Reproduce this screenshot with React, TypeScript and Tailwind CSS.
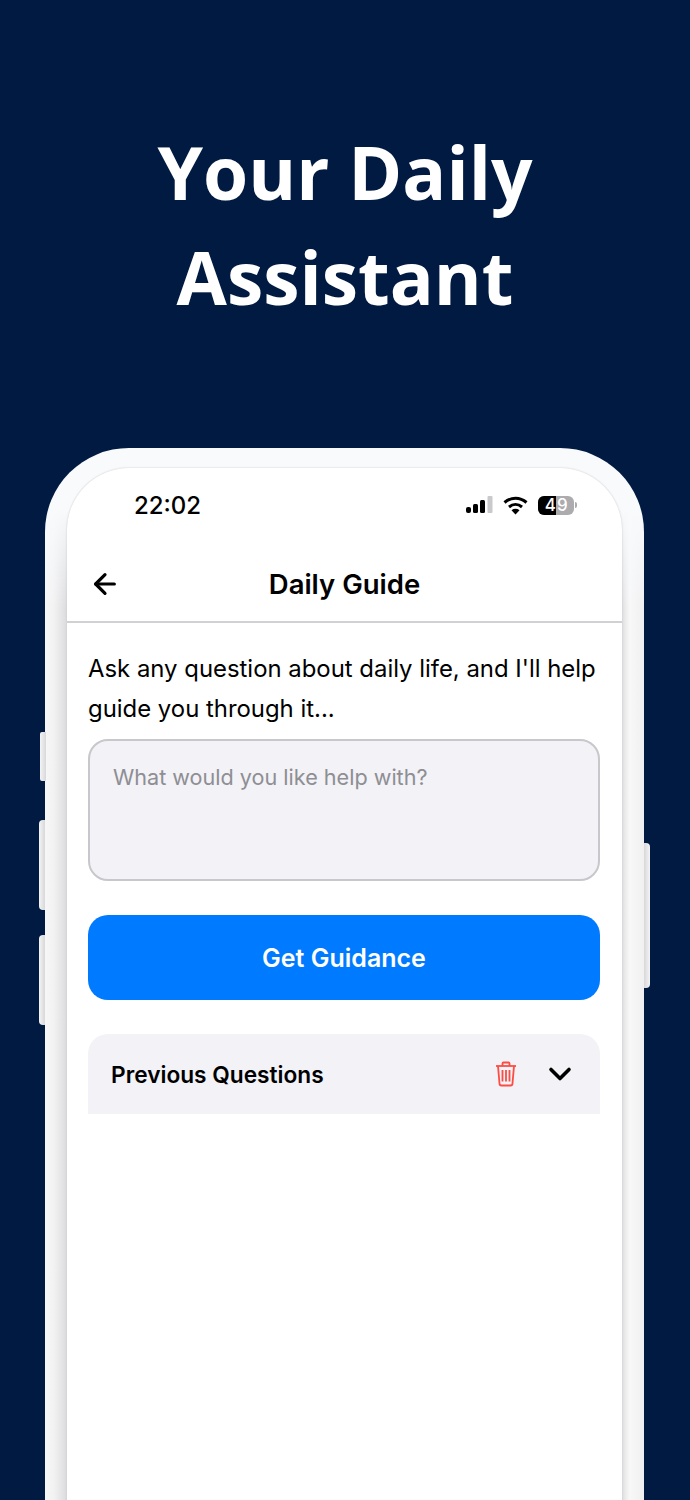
import { ArrowLeft, ChevronDown } from 'lucide-react';

function StatusIcons() {
  return (
    <div className="flex items-center gap-[10px]">
      <svg width="28" height="18" viewBox="0 0 28 18">
        <rect x="1" y="11" width="5" height="6" rx="2" fill="#000" />
        <rect x="8" y="8" width="5" height="9" rx="1.5" fill="#000" />
        <rect x="15" y="4" width="5" height="13" rx="1.5" fill="#000" />
        <rect x="22.5" y="0" width="5" height="17" rx="1" fill="#c9c9cb" />
      </svg>
      <svg width="25" height="19" viewBox="0 0 25 19">
        <path d="M1.5 6.5C8 .8 17 .8 23.500 6.500" fill="none" stroke="#000" strokeWidth="3" />
        <path d="M6 11c4-3.400 9-3.400 13 0" fill="none" stroke="#000" strokeWidth="3" />
        <path d="M8.500 14.200c2.500-1.900 5.500-1.900 8 0L12.500 18.500z" fill="#000" />
      </svg>
      <div className="flex items-center gap-[1px]">
        <div className="flex h-[19px] w-[36px] overflow-hidden rounded-[6px] bg-[#acacae] text-[17px] leading-[19px] font-medium text-white">
          <div className="flex w-[18px] justify-end bg-black">4</div>
          <div className="pl-[1px]">9</div>
        </div>
        <div className="h-[6px] w-[2px] rounded-r-full bg-[#acacae]" />
      </div>
    </div>
  );
}

function TrashIcon() {
  return (
    <svg width="22" height="26" viewBox="0 0 22 26" fill="none" stroke="#ff3b30" strokeWidth="1.800" className="opacity-90">
      <path d="M1 5h20" />
      <path d="M7.500 5V2.500a1 1 0 0 1 1-1h5a1 1 0 0 1 1 1V5" />
      <path d="M3 5l1.500 17.500a2 2 0 0 0 2 2h9a2 2 0 0 0 2-2L19 5" />
      <path d="M7.500 9v11.500M11 9v11.500M14.500 9v11.500" />
    </svg>
  );
}

function SideButton({ className }: { className: string }) {
  return <div className={`absolute w-[6px] bg-gradient-to-r from-[#f4f4f5] to-[#d8d8da] ${className}`} />;
}

export default function App() {
  return (
    <div className="h-[1500px] w-[690px] overflow-hidden bg-[#001a41] font-['Inter',sans-serif] text-black">
      <h1 className="pt-[119px] pb-[119px] text-center font-['Open_Sans',sans-serif] text-[73px] leading-[105px] font-bold text-white">
        Your Daily
        <br />
        Assistant
      </h1>

      <div className="relative mr-[46px] ml-[45px]">
        <SideButton className="top-[284px] -left-[5px] h-[49px] rounded-l-[2px]" />
        <SideButton className="top-[372px] -left-[6px] h-[90px] rounded-l-[4px]" />
        <SideButton className="top-[487px] -left-[6px] h-[90px] rounded-l-[4px]" />
        <SideButton className="top-[395px] -right-[6px] h-[145px] rotate-180 rounded-l-[4px]" />

        <div className="h-[1100px] rounded-t-[84px] bg-[linear-gradient(to_bottom,#f8fafc_60px,transparent_160px),linear-gradient(to_right,#f7f7f8_0%,#f2f2f3_1.5%,#dcdcde_3.6%,#f8fafc_8%,#f8fafc_92%,#dfdfe1_96.3%,#f8f8f9_97.6%,#f0f0f1_100%)] px-[22px] pt-[20px]">
          <div className="h-[1080px] rounded-t-[62px] bg-white shadow-[0_0_2px_#c5c5c8]">
            <div className="flex h-[76px] items-center justify-between pr-[45px] pb-[2px] pl-[67px]">
              <span className="pt-[2px] text-[24px] leading-[30px] font-medium">22:02</span>
              <StatusIcons />
            </div>

            <div className="relative flex h-[79px] items-center justify-center border-b-2 border-[#d1d1d3] pt-[5px]">
              <ArrowLeft className="absolute top-[24px] left-[22px]" size={32} strokeWidth={2.400} />
              <span className="text-[27.500px] font-semibold">Daily Guide</span>
            </div>

            <div className="pt-[26px] pr-[22px] pl-[21px]">
              <p className="text-[23.900px] leading-[40px] whitespace-nowrap">
                Ask any question about daily life, and I'll help
                <br />
                guide you through it...
              </p>

              <div className="mt-[10px] h-[142px] rounded-[20px] border-2 border-[#c7c7cc] bg-[#f2f2f7] px-[23px] py-[19px] text-[21.600px] leading-[34px] text-[#8e8e93]">
                What would you like help with?
              </div>

              <button className="mt-[34px] flex h-[85px] w-full items-center justify-center rounded-[20px] bg-[#007aff] pt-[2px] text-[25px] font-semibold text-white">
                Get Guidance
              </button>

              <div className="mt-[34px] flex h-[80px] items-center justify-between rounded-t-[20px] bg-[#f2f2f7] pr-[22px] pl-[23px]">
                <span className="pt-[2px] text-[22.700px] font-semibold">Previous Questions</span>
                <div className="flex items-center gap-[25px]">
                  <TrashIcon />
                  <ChevronDown size={36} strokeWidth={2.400} />
                </div>
              </div>
            </div>
          </div>
        </div>
      </div>
    </div>
  );
}
